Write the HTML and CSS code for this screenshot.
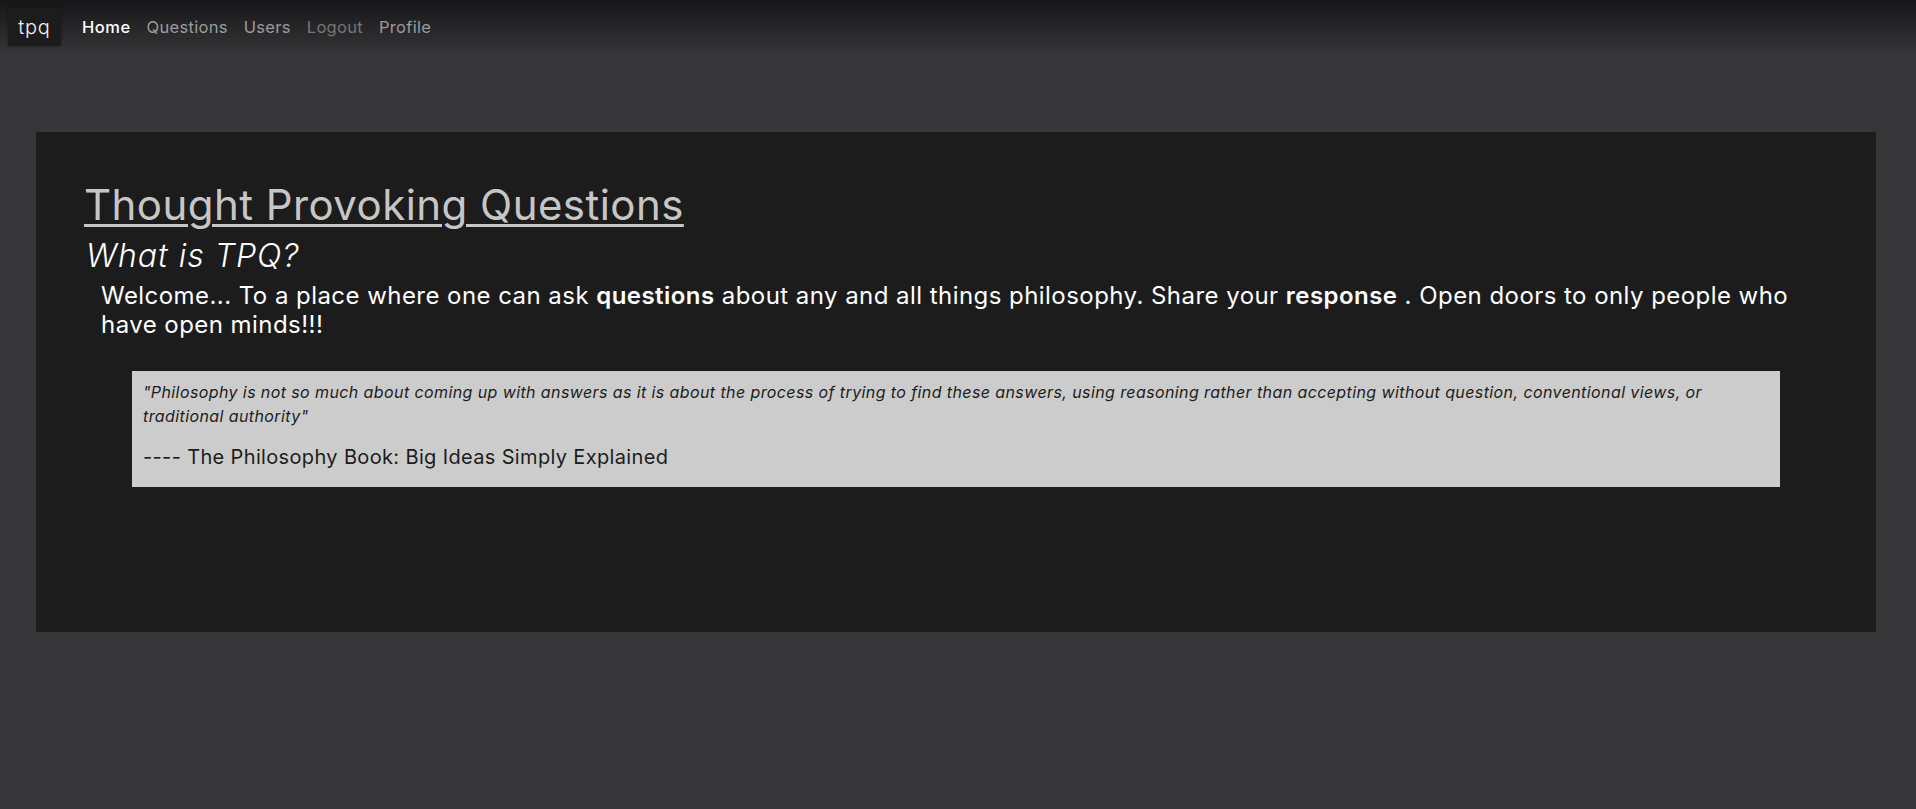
FILE: index.html
```html
<!DOCTYPE html>
<html lang="en">
<head>
<meta charset="utf-8">
<title>tpq</title>
<link rel="stylesheet" href="styles.css">
</head>
<body>
<nav class="navbar">
  <a class="brand" href="#">tpq</a>
  <ul class="nav-links">
    <li><a class="nav-link active" href="#">Home</a></li>
    <li><a class="nav-link" href="#">Questions</a></li>
    <li><a class="nav-link" href="#">Users</a></li>
    <li><a class="nav-link disabled" href="#">Logout</a></li>
    <li><a class="nav-link" href="#">Profile</a></li>
  </ul>
</nav>
<main class="jumbotron">
  <h1 class="title"><a href="#">Thought Provoking Questions</a></h1>
  <h2 class="subtitle">What is TPQ?</h2>
  <p class="lead">Welcome... To a place where one can ask <strong>questions</strong> about any and all things philosophy. Share your <strong>response</strong> . Open doors to only people who<br>have open minds!!!</p>
  <blockquote class="quote">
    <p class="quote-text">"Philosophy is not so much about coming up with answers as it is about the process of trying to find these answers, using reasoning rather than accepting without question, conventional views, or<br>traditional authority"</p>
    <p class="cite">---- The Philosophy Book: Big Ideas Simply Explained</p>
  </blockquote>
</main>
</body>
</html>
```
FILE: styles.css
```css
* { box-sizing: border-box; }
body {
  margin: 0;
  background: #363638;
  font-family: Inter, "Liberation Sans", sans-serif;
  color: #fff;
}
.navbar {
  height: 54px;
  display: flex;
  align-items: center;
  padding: 0 8px;
  background: linear-gradient(to bottom, #161618 0%, #262628 50%, #363638 100%);
}
.brand {
  width: 53px;
  height: 38px;
  display: flex;
  align-items: center;
  justify-content: center;
  background: #1c1c1c;
  box-shadow: 0 0 3px rgba(0,0,0,0.35);
  color: #f2f2f2;
  font-size: 20px;
  font-weight: 300;
  letter-spacing: 0.8px;
  text-decoration: none;
}
.nav-links {
  display: flex;
  list-style: none;
  margin: 0 0 0 13px;
  padding: 0;
}
.nav-link {
  display: block;
  padding: 8px 8px;
  font-size: 16.5px;
  letter-spacing: 0.3px;
  color: #9b9b9b;
  text-decoration: none;
}
.nav-link.active { color: #fff; font-weight: 500; letter-spacing: 0.5px; }
.nav-link.disabled { color: #767676; }
.jumbotron {
  height: 500px;
  margin: 78px 40px 0 36px;
  padding: 47px 48px;
  background: #1c1c1c;
}
.title {
  margin: 0;
  font-size: 42px;
  line-height: 51px;
  font-weight: 400;
  letter-spacing: 0.45px;
}
.title a {
  color: #c6c6c6;
  text-decoration: underline;
  text-decoration-thickness: 3px;
  text-underline-offset: 4px;
}
.subtitle {
  margin: 6px 0 0 2px;
  font-size: 32px;
  line-height: 39px;
  font-style: italic;
  font-weight: 300;
  letter-spacing: 1px;
}
.lead {
  margin: 6px 0 0 17px;
  font-size: 24px;
  line-height: 29px;
  letter-spacing: 0.45px;
}
.lead strong { font-weight: 600; }
.quote {
  margin: 32px 48px 0 48px;
  padding: 9px 11px 16px;
  background: #cccccc;
  color: #1c1c1c;
}
.quote-text {
  margin: 0;
  font-size: 16px;
  line-height: 24px;
  font-style: italic;
  letter-spacing: 0.4px;
}
.cite {
  margin: 15px 0 0;
  font-size: 20px;
  line-height: 28px;
  letter-spacing: 0.35px;
}
```
